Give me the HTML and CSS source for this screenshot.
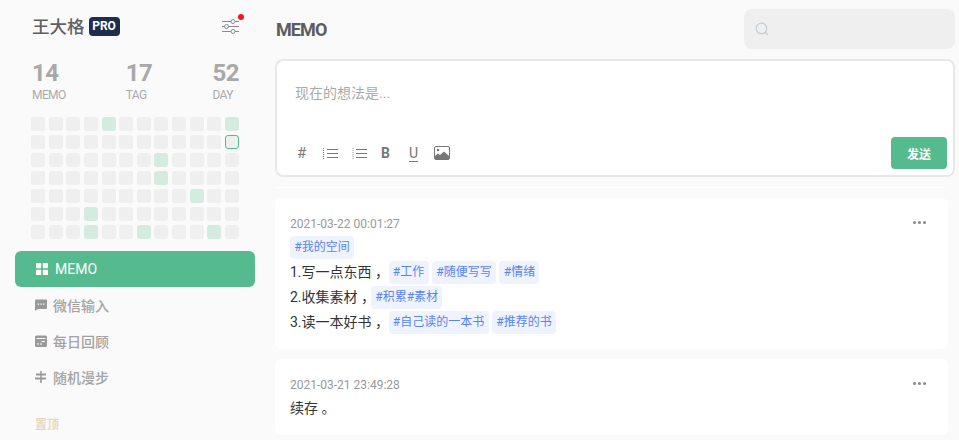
FILE: index.html
```html
<!DOCTYPE html>
<html lang="zh">
<head>
<meta charset="utf-8">
<title>MEMO</title>
<link rel="stylesheet" href="styles.css">
</head>
<body>
<div class="page">
  <aside class="sidebar">
    <div class="user">
      <span class="user-name">王大格</span>
      <span class="pro">PRO</span>
      <span class="settings">
        <svg width="17" height="16" viewBox="0 0 17 16" fill="none" stroke="#8a8a8a" stroke-width="1">
          <path d="M0 3.500H9M13 3.500H17M0 8.500H2.500M6.500 8.500H17M0 13.500H9M13 13.500H17"/>
          <circle cx="11" cy="3.500" r="2"/><circle cx="4.500" cy="8.500" r="2"/><circle cx="11" cy="13.500" r="2"/>
        </svg>
        <i class="dot"></i>
      </span>
    </div>
    <div class="stats">
      <div class="stat"><b>14</b><span>MEMO</span></div>
      <div class="stat"><b>17</b><span>TAG</span></div>
      <div class="stat"><b>52</b><span>DAY</span></div>
    </div>
    <div class="heat">
      <i></i><i></i><i></i><i></i><i class="on"></i><i></i><i></i><i></i><i></i><i></i><i></i><i class="on"></i>
      <i></i><i></i><i></i><i></i><i></i><i></i><i></i><i></i><i></i><i></i><i></i><i class="today"></i>
      <i></i><i></i><i></i><i></i><i></i><i></i><i></i><i class="on"></i><i></i><i></i><i></i><i></i>
      <i></i><i></i><i></i><i></i><i></i><i></i><i></i><i class="on"></i><i></i><i></i><i></i><i></i>
      <i></i><i></i><i></i><i></i><i></i><i></i><i></i><i></i><i></i><i class="on"></i><i></i><i></i>
      <i></i><i></i><i></i><i class="on"></i><i></i><i></i><i></i><i></i><i></i><i></i><i></i><i></i>
      <i></i><i></i><i></i><i class="on"></i><i></i><i></i><i class="on"></i><i></i><i></i><i></i><i class="on"></i><i></i>
    </div>
    <nav class="nav">
      <a class="nav-item active">
        <svg class="nav-icon" width="12" height="12" viewBox="0 0 12 12" fill="#fff"><rect width="5.200" height="5.200" rx=".6"/><rect x="6.800" width="5.200" height="5.200" rx=".6"/><rect y="6.800" width="5.200" height="5.200" rx=".6"/><rect x="6.800" y="6.800" width="5.200" height="5.200" rx=".6"/></svg>
        <span>MEMO</span>
      </a>
      <a class="nav-item">
        <svg class="nav-icon" width="12" height="12" viewBox="0 0 12 12"><path fill="#999" d="M1 .5h10a1 1 0 0 1 1 1V9a1 1 0 0 1-1 1H3l-3 2V1.500a1 1 0 0 1 1-1z"/><path fill="#fff" d="M2.700 4.500h1.300v1.300H2.700zM5.400 4.500h1.300v1.300H5.400zM8.100 4.500h1.300v1.300H8.100z"/></svg>
        <span>微信输入</span>
      </a>
      <a class="nav-item">
        <svg class="nav-icon" width="12" height="12" viewBox="0 0 12 12"><rect y=".5" width="12" height="11.500" rx="1.500" fill="#999"/><path fill="#fff" d="M1.500 3h9v1h-9zM6.500 6h3.500v1H6.500zM2 8.500h2v1H2zM5 8.500h2v1H5z"/></svg>
        <span>每日回顾</span>
      </a>
      <a class="nav-item">
        <svg class="nav-icon" width="12" height="12" viewBox="0 0 12 12" fill="#999"><path d="M5.200 0h1.600v12H5.200z"/><path d="M1 2.500h10v2H1zM0 6.500h11v2H0z"/></svg>
        <span>随机漫步</span>
      </a>
    </nav>
    <div class="pinned">置顶</div>
  </aside>

  <main class="main">
    <header class="topbar">
      <h1 class="title">MEMO</h1>
      <div class="search">
        <svg width="14" height="14" viewBox="0 0 14 14" fill="none" stroke="#c6ccd4" stroke-width="1.200"><circle cx="6.500" cy="6.500" r="5.300"/><path d="M10.500 10.500l2.500 2.500"/></svg>
      </div>
    </header>

    <section class="editor">
      <div class="placeholder">现在的想法是...</div>
      <div class="toolbar">
        <div class="tools">
          <span class="tool t-hash">#</span>
          <svg class="tool" width="15" height="11" viewBox="0 0 15 11" fill="none" stroke="#777"><path d="M4 1.500h11M4 5.500h11M4 9.500h11"/><path stroke-dasharray="1 1" d="M.5 0v3M.5 4v3M.5 8v3"/></svg>
          <svg class="tool" width="15" height="11" viewBox="0 0 15 11" fill="none" stroke="#777"><path d="M4 1.500h11M4 5.500h11M4 9.500h11"/><path stroke-width=".8" stroke-dasharray="1 1" d="M1 0v3M1 4v3M1 8v3"/></svg>
          <span class="tool t-b">B</span>
          <span class="tool t-u">U</span>
          <svg class="tool" width="16" height="14" viewBox="0 0 16 14"><rect x=".5" y=".5" width="15" height="13" rx="1.500" fill="#fff" stroke="#777"/><circle cx="4" cy="4" r="1.300" fill="#777"/><path fill="#777" d="M1 13V10l3-2.500 2 1.500 4-3.500 5 4.500V13a.5.500 0 0 1-.5.500H1.500z"/></svg>
        </div>
        <button class="send">发送</button>
      </div>
    </section>

    <div class="rule"></div>

    <article class="card">
      <div class="card-head"><time class="date">2021-03-22 00:01:27</time><span class="more"><i></i><i></i><i></i></span></div>
      <div class="line"><span class="tag">#我的空间</span></div>
      <div class="line">1.写一点东西 <span class="comma">，</span> <span class="tag">#工作</span> <span class="tag">#随便写写</span> <span class="tag">#情绪</span></div>
      <div class="line">2.收集素材 <span class="comma">，</span><span class="tag">#积累#素材</span></div>
      <div class="line">3.读一本好书 <span class="comma">，</span> <span class="tag">#自己读的一本书</span> <span class="tag">#推荐的书</span></div>
    </article>

    <article class="card">
      <div class="card-head"><time class="date">2021-03-21 23:49:28</time><span class="more"><i></i><i></i><i></i></span></div>
      <div class="line">续存 。</div>
    </article>
  </main>
</div>
</body>
</html>
```
FILE: styles.css
```css
* { box-sizing: border-box; }
html, body { margin: 0; height: 100%; }
body {
  background: #fafafa;
  font-family: Roboto, "Noto Sans CJK SC", sans-serif;
  color: #333;
  overflow: hidden;
}
.page { display: flex; height: 440px; overflow: hidden; }

.sidebar { width: 270px; flex: none; padding: 0 15px; }
.user { display: flex; align-items: center; height: 19px; margin: 17px 16px 0 17px; position: relative; }
.user-name { font-size: 17.5px; font-weight: 500; color: #5f5f5f; line-height: 19px; position: relative; top: 1px; }
.pro {
  margin-left: 4px; width: 31px; height: 19px; line-height: 19px; border-radius: 4px;
  background: #1f2d4d; color: #fff; font-size: 12px; font-weight: 700; text-align: center;
}
.settings { margin-left: auto; position: relative; display: block; height: 16px; width: 17px; top: -1px; }
.settings svg { display: block; }
.dot { position: absolute; right: -5px; top: -4px; width: 6px; height: 6px; border-radius: 50%; background: #f5161b; }

.stats { display: flex; justify-content: space-between; margin: 23px 16px 0 17px; }
.stat { display: flex; flex-direction: column; }
.stat b { font-size: 24px; line-height: 28px; font-weight: 700; color: #a8a8a8; letter-spacing: -.5px; }
.stat span { font-size: 12px; line-height: 15px; margin-top: 1px; color: #aaa; letter-spacing: -.6px; }

.heat {
  display: grid; grid-template-columns: repeat(12, 14px); grid-auto-rows: 14px;
  justify-content: space-between; row-gap: 4px; margin: 14px 16px 0 16px;
}
.heat i { display: block; border-radius: 3px; background: #efefef; }
.heat .on { background: #d4ebdf; }
.heat .today { border: 1px solid #55bb8e; }

.nav { margin-top: 12px; }
.nav-item { display: flex; align-items: center; height: 36px; padding-left: 20px; gap: 6px; font-size: 14px; font-weight: 500; color: #a3a3a3; border-radius: 6px; }
.nav-item.active { background: #55bb8e; color: #fff; font-weight: 400; padding-left: 21px; gap: 7px; }
.nav-icon { flex: none; }
.pinned { margin: 22px 0 0 20px; font-size: 12px; line-height: 16px; font-weight: 700; color: #e6d9c0; }

.main { flex: 1; min-width: 0; padding: 0 4px 0 5px; }
.topbar { display: flex; align-items: center; justify-content: space-between; padding-top: 9px; height: 59px; padding-bottom: 10px; }
.title { margin: 2px 0 0 1px; font-size: 18px; font-weight: 700; color: #5c5c5c; letter-spacing: -.9px; line-height: 38px; }
.search { width: 211px; height: 40px; background: #efefef; border-radius: 8px; display: flex; align-items: center; padding-left: 11px; }

.editor { height: 118px; background: #fff; border: 2px solid #e8e8e8; border-radius: 8px; padding: 0 6px 6px 18px; display: flex; flex-direction: column; justify-content: space-between; }
.placeholder { font-size: 14px; line-height: 20px; margin-top: 22px; color: #aaa; }
.toolbar { display: flex; align-items: center; justify-content: space-between; }
.tools { display: flex; align-items: center; color: #777; }
.tool { display: block; flex: none; }
.tools svg:nth-child(2) { margin-left: 18px; }
.tools svg:nth-child(3) { margin-left: 14px; }
.tools svg:nth-child(6) { margin-left: 15px; }
.t-hash { font-size: 15px; margin-left: 2px; width: 8px; line-height: 16px; }
.t-b { font-size: 14px; font-weight: 700; margin-left: 14px; width: 10px; line-height: 16px; }
.t-u { font-size: 14px; margin-left: 18px; width: 10px; text-decoration: underline; text-underline-offset: 3px; line-height: 16px; }
.send { width: 56px; height: 32px; border: 0; padding: 0; border-radius: 4px; background: #55bb8e; color: #fff; font: 700 12px Roboto, "Noto Sans CJK SC", sans-serif; }

.rule { height: 1px; margin: 10px 11px 10px 0; background: #fff; }

.card { width: 673px; background: #fff; border-radius: 6px; padding: 18px 0 15px 15px; margin-bottom: 10px; }
.card-head { display: flex; justify-content: space-between; align-items: center; height: 16px; margin-bottom: 4px; padding-right: 22px; }
.date { font-size: 12px; color: #999; }
.more { display: flex; gap: 2px; margin-top: -4px; }
.more i { width: 3px; height: 3px; border-radius: 50%; background: #888; }
.line { height: 25px; line-height: 23px; font-size: 14px; color: #333; white-space: nowrap; }
.line:last-child { height: 23px; }
.comma { letter-spacing: -4px; }
.tag { display: inline-block; height: 23px; line-height: 23px; padding: 0 4.3px; border-radius: 4px; background: #eef3fe; color: #5783f7; font-size: 12px; vertical-align: top; }
```
